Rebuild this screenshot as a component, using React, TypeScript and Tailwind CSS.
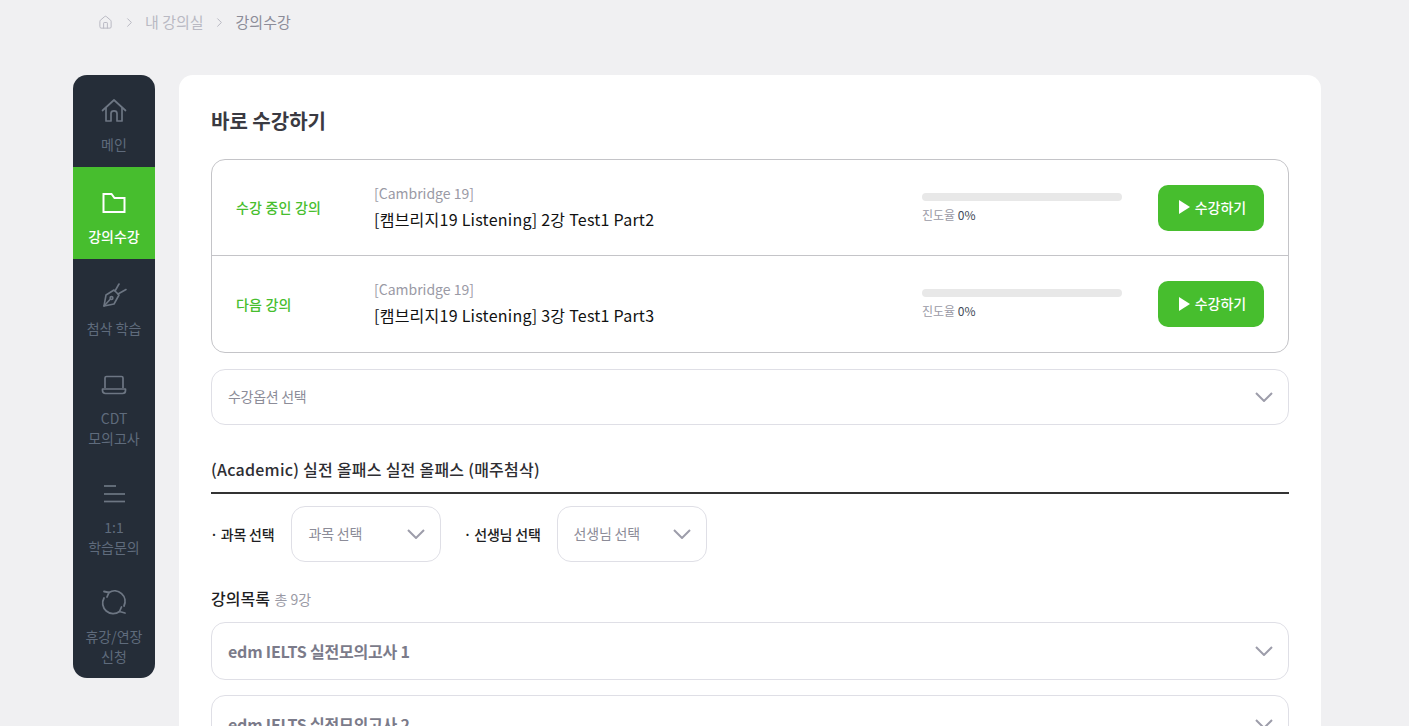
import React from 'react';
import { ChevronRight, Home } from 'lucide-react';

const fontStack = '[font-family:"Noto_Sans_CJK_KR","Noto_Sans",sans-serif]';

const PenIcon = () => (
  <svg width="26" height="26" viewBox="0 0 26 26" fill="none" stroke="currentColor" strokeWidth="1.6" strokeLinejoin="round" strokeLinecap="round">
    <path d="M3 24 L5 13 L13 8 L18 13 L13 22 Z" />
    <path d="M3 24 L9 17.5" />
    <circle cx="10.5" cy="16" r="1.4" />
    <path d="M14 9 L18 2" />
    <path d="M17 12 L25 7.5" />
  </svg>
);

const HouseIcon = () => (
  <svg width="26" height="26" viewBox="0 0 26 26" fill="none" stroke="currentColor" strokeWidth="1.7" strokeLinejoin="round" strokeLinecap="round">
    <path d="M1.5 12.5 L13 2 L24.5 12.5" />
    <path d="M5 10 V23 H10 V15.5 C10 12 16 12 16 15.5 V23 H21 V10" />
  </svg>
);

const FolderIcon = () => (
  <svg width="24" height="22" viewBox="0 0 24 22" fill="none" stroke="currentColor" strokeWidth="2" strokeLinejoin="miter">
    <path d="M1.5 2 H9.5 L12.5 6 H22.5 V20 H1.5 Z" />
  </svg>
);

const LaptopIcon = () => (
  <svg width="26" height="20" viewBox="0 0 26 20" fill="none" stroke="currentColor" strokeWidth="1.7" strokeLinejoin="round">
    <path d="M4 13 V3 C4 2 4.5 1.5 5.5 1.5 H20.5 C21.5 1.5 22 2 22 3 V13" />
    <path d="M1.5 14 H24.5 V15.5 C24.5 17.5 23.5 18.5 21.5 18.5 H4.5 C2.5 18.5 1.5 17.5 1.5 15.5 Z" />
  </svg>
);

const LinesIcon = () => (
  <svg width="24" height="20" viewBox="0 0 24 20" fill="none" stroke="currentColor" strokeWidth="1.7">
    <path d="M2 2 H14" />
    <path d="M2 10 H23" />
    <path d="M2 17.5 H23" />
  </svg>
);

const CycleIcon = () => (
  <svg width="26" height="26" viewBox="0 0 26 26" fill="none" stroke="currentColor" strokeWidth="1.8" strokeLinecap="round" strokeLinejoin="round" className="-mt-[2px]">
    <path d="M8 3.5 A10.5 10.5 0 0 1 23 17" />
    <path d="M18.5 22.5 A10.5 10.5 0 0 1 3 9" />
    <path d="M3 2.5 L8 3.5 L6 8" />
    <path d="M24 24 L18.5 22.5 L20.5 18" />
  </svg>
);

// wide, shallow arrow used on every select and accordion row
const Arrow = () => (
  <svg width="18" height="10" viewBox="0 0 18 10" fill="none" stroke="#9d9daa" strokeWidth="2">
    <path d="M1 1 L9 9 L17 1" />
  </svg>
);

const menu = [
  { label: ['메인'], icon: <HouseIcon />, tall: false },
  { label: ['강의수강'], icon: <FolderIcon />, tall: false, active: true },
  { label: ['첨삭 학습'], icon: <PenIcon />, tall: false },
  { label: ['CDT', '모의고사'], icon: <LaptopIcon />, tall: true },
  { label: ['1:1', '학습문의'], icon: <LinesIcon />, tall: true },
  { label: ['휴강/연장', '신청'], icon: <CycleIcon />, tall: true },
];

const lectures = [
  { status: '수강 중인 강의', title: '[캠브리지19 Listening] 2강 Test1 Part2' },
  { status: '다음 강의', title: '[캠브리지19 Listening] 3강 Test1 Part3' },
];

const Sidebar = () => (
  <aside className="w-[82px] h-[603px] shrink-0 bg-[#252d38] rounded-[14px] overflow-hidden">
    {menu.map((item) => (
      <div
        key={item.label.join('')}
        className={`flex flex-col items-center ${item.tall ? 'h-[109px] pt-[18px]' : 'h-[92px] pt-[20px]'} ${item.active ? 'bg-[#47be2e] text-white' : 'text-[#6d7683]'}`}
      >
        <div className="h-[32px] flex items-center justify-center">{item.icon}</div>
        <div className={`mt-[7px] text-[14px] leading-[20px] text-center ${item.active ? 'font-medium' : 'text-[#5f6b7c]'}`}>
          {item.label.map((line) => (
            <div key={line}>{line}</div>
          ))}
        </div>
      </div>
    ))}
  </aside>
);

const App = () => {
  return (
    <div className={`h-screen overflow-hidden bg-[#f0f0f2] ${fontStack}`}>
      <nav className="h-[75px] pl-[98px] pb-[31px] flex items-center text-[15px] text-[#b9b9c3]">
        <Home size={15} strokeWidth={1.6} />
        <ChevronRight size={15} strokeWidth={1.6} className="ml-[9px]" />
        <span className="ml-[8px]">내 강의실</span>
        <ChevronRight size={15} strokeWidth={1.6} className="ml-[8px]" />
        <span className="ml-[9px] text-[#8c8c98]">강의수강</span>
      </nav>

      <div className="flex gap-[24px] pl-[73px] items-start">
        <Sidebar />

        <main className="w-[1142px] bg-white rounded-[14px] px-[32px] pt-[30px] pb-10">
          <h1 className="text-[20px] leading-[32px] font-bold text-[#3a3a42]">바로 수강하기</h1>

          <section className="mt-[22px] border border-[#c4c4c8] rounded-[14px]">
            {lectures.map((row, i) => (
              <div
                key={row.title}
                className={`h-[96px] flex items-center px-[24px] ${i === 0 ? 'border-b border-[#c4c4c8]' : ''}`}
              >
                <div className="w-[138px] text-[14px] tracking-[0.2px] font-medium text-[#47be2e]">{row.status}</div>
                <div className="flex-1 mb-[2px]">
                  <div className="text-[14px] leading-[20px] text-[#9a9aa5]">[Cambridge 19]</div>
                  <div className="mt-[4px] text-[16px] tracking-[0.25px] leading-[24px] text-[#111111]">{row.title}</div>
                </div>
                <div className={`w-[200px] mr-[36px] ${i === 0 ? 'pt-[3px]' : 'pt-[1px]'}`}>
                  <div className="h-[8px] rounded-full bg-[#e8e8e8]" />
                  <div className="mt-[4px] text-[12px] leading-[20px] text-[#9a9aa5]">
                    진도율 <span className="text-[#3f4a58]">0%</span>
                  </div>
                </div>
                <button className="w-[106px] h-[46px] pb-[1px] rounded-[10px] bg-[#47be2e] text-white text-[14px] font-medium flex items-center justify-center gap-[5px] pl-[3px]">
                  <svg width="11" height="14" viewBox="0 0 11 14" fill="currentColor">
                    <path d="M0 0 L11 7 L0 14 Z" />
                  </svg>
                  수강하기
                </button>
              </div>
            ))}
          </section>

          <div className="mt-[16px] h-[56px] pb-[1px] border border-[#dfdfe6] rounded-[14px] flex items-center justify-between pl-[16px] pr-[15px] text-[14px] tracking-[-0.3px] text-[#8c8c98]">
            수강옵션 선택
            <Arrow />
          </div>

          <h2 className="mt-[32px] pb-[11px] border-b-2 border-[#333333] text-[16px] tracking-[0.25px] leading-[24px] font-medium text-[#2e2e33]">
            (Academic) 실전 올패스 실전 올패스 (매주첨삭)
          </h2>

          <div className="mt-[12px] flex items-center">
            <span className="text-[14px] tracking-[-0.2px] font-medium text-[#1e1e22] -ml-[1px]">· 과목 선택</span>
            <div className="ml-[17px] w-[150px] h-[56px] pb-[1px] border border-[#dfdfe6] rounded-[14px] flex items-center justify-between pl-[16px] pr-[15px] text-[14px] tracking-[-0.2px] text-[#8c8c98]">
              과목 선택
              <Arrow />
            </div>
            <span className="ml-[22px] text-[14px] tracking-[-0.2px] font-medium text-[#1e1e22]">· 선생님 선택</span>
            <div className="ml-[16px] w-[150px] h-[56px] pb-[1px] border border-[#dfdfe6] rounded-[14px] flex items-center justify-between pl-[16px] pr-[15px] text-[14px] tracking-[-0.2px] text-[#8c8c98]">
              선생님 선택
              <Arrow />
            </div>
          </div>

          <div className="mt-[23px] text-[16px] leading-[26px] font-medium text-[#1e1e22]">
            강의목록 <span className="ml-[1px] text-[14px] font-normal text-[#9a9aa5]">총 9강</span>
          </div>

          <div className="mt-[10px] space-y-[15px]">
            {['edm IELTS 실전모의고사 1', 'edm IELTS 실전모의고사 2'].map((name) => (
              <div
                key={name}
                className="h-[58px] border border-[#dfdfe6] rounded-[14px] flex items-center justify-between pl-[16px] pr-[15px] text-[16px] tracking-[-0.2px] font-bold text-[#7b7b8a]"
              >
                {name}
                <Arrow />
              </div>
            ))}
          </div>
        </main>
      </div>
    </div>
  );
};

export default App;
